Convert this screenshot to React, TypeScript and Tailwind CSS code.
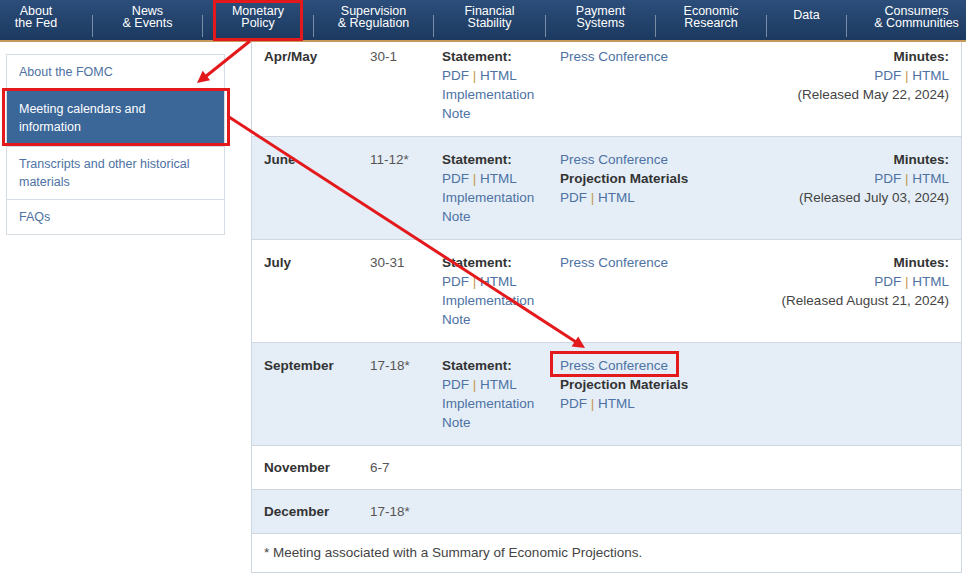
import React from "react";

const navItems = [
  { lines: ["About", "the Fed"], w: "w-[92px] pr-[20px]" },
  { lines: ["News", "& Events"], w: "w-[109px]" },
  { lines: ["Monetary", "Policy"], w: "w-[110px]" },
  { lines: ["Supervision", "& Regulation"], w: "w-[119px]" },
  { lines: ["Financial", "Stability"], w: "w-[111px]" },
  { lines: ["Payment", "Systems"], w: "w-[109px]" },
  { lines: ["Economic", "Research"], w: "w-[110px]" },
  { lines: ["Data"], w: "w-[79px]" },
  { lines: ["Consumers", "& Communities"], w: "flex-1 pl-[20px]" },
];

const sideItems = [
  { label: "About the FOMC", active: false },
  { label: "Meeting calendars and information", active: true },
  { label: "Transcripts and other historical materials", active: false },
  { label: "FAQs", active: false },
];

function PdfHtml() {
  return (
    <div>
      <span className="text-[#4d72a3]">PDF</span>
      <span className="text-[#c39a4f]"> | </span>
      <span className="text-[#4d72a3]">HTML</span>
    </div>
  );
}

function Statement() {
  return (
    <>
      <div className="font-bold text-[#333]">Statement:</div>
      <PdfHtml />
      <div className="text-[#4d72a3]">Implementation Note</div>
    </>
  );
}

function Press({ projection }: { projection?: boolean }) {
  return (
    <>
      <div className="text-[#4d72a3]">Press Conference</div>
      {projection && (
        <>
          <div className="font-bold text-[#333]">Projection Materials</div>
          <PdfHtml />
        </>
      )}
    </>
  );
}

function Minutes({ released }: { released: string }) {
  return (
    <div className="text-right">
      <div className="font-bold text-[#333]">Minutes:</div>
      <PdfHtml />
      <div className="text-[#444]">(Released {released})</div>
    </div>
  );
}

interface Meeting {
  month: string;
  dates: string;
  projection?: boolean;
  released?: string;
  full: boolean;
}

const meetings: Meeting[] = [
  { month: "Apr/May", dates: "30-1", released: "May 22, 2024", full: true },
  { month: "June", dates: "11-12*", projection: true, released: "July 03, 2024", full: true },
  { month: "July", dates: "30-31", released: "August 21, 2024", full: true },
  { month: "September", dates: "17-18*", projection: true, full: true },
  { month: "November", dates: "6-7", full: false },
  { month: "December", dates: "17-18*", full: false },
];

export default function App() {
  return (
    <div
      className="relative w-[966px] h-[578px] overflow-hidden bg-white"
      style={{ fontFamily: '"Liberation Sans", Arial, sans-serif' }}
    >
      <nav className="flex h-[42px] border-b-2 border-[#c8995a] bg-linear-to-b from-[#2c4e7a] to-[#1c3a60] text-white text-[12.5px] leading-[12px]">
        {navItems.map((item, i) => (
          <React.Fragment key={i}>
            {i > 0 && <div className="w-px h-[22px] mt-[15px] bg-white/40" />}
            <div className={`${item.w} flex flex-col items-center ${item.lines.length === 1 ? "pt-[9px]" : "pt-[5px]"}`}>
              {item.lines.map((l) => (
                <span key={l} className="whitespace-nowrap">{l}</span>
              ))}
            </div>
          </React.Fragment>
        ))}
      </nav>

      <div className="flex">
        <aside className="w-[219px] ml-[6px] mt-[12px] self-start border border-[#d5dce4] text-[12.5px] leading-[18px]">
          {sideItems.map((s, i) => (
            <div
              key={s.label}
              className={`pl-[12px] pr-[30px] ${i < sideItems.length - 1 ? "border-b border-[#d5dce4]" : ""} ${
                s.active ? "bg-[#3a6698] text-white py-[10px]" : "text-[#4d72a3] py-[8px]"
              }`}
            >
              {s.label}
            </div>
          ))}
        </aside>

        <section className="flex-1 ml-[26px] mr-[4px] border-x border-[#cfd8e1] text-[13.5px] leading-[19px]">
          {meetings.map((m, i) => (
            <div
              key={m.month}
              className={`flex border-b border-[#cfd8e1] pl-[12px] pr-[12px] ${
                i % 2 === 1 ? "bg-[#e5eef7]" : "bg-white"
              } ${i === 0 ? "pt-[5px] pb-[13px]" : m.full ? "py-[13px]" : "py-[12px]"}`}
            >
              <div className="w-[106px] font-bold text-[#333]">{m.month}</div>
              <div className="w-[72px] text-[#555]">{m.dates}</div>
              {m.full && (
                <>
                  <div className="w-[118px] pr-[12px]">
                    <Statement />
                  </div>
                  <div className="flex-1">
                    <Press projection={m.projection} />
                  </div>
                  {m.released && <Minutes released={m.released} />}
                </>
              )}
            </div>
          ))}
          <div className="pl-[12px] pt-[9px] pb-[10px] border-b border-[#cfd8e1] text-[#444]">
            * Meeting associated with a Summary of Economic Projections.
          </div>
        </section>
      </div>

      <svg className="absolute inset-0 w-full h-full pointer-events-none" viewBox="0 0 966 578">
        <g fill="none" stroke="#e3191c" strokeWidth="3">
          <rect x="214.5" y="1.5" width="87" height="38" />
          <rect x="3.5" y="89.5" width="225" height="55" />
          <rect x="551.5" y="352.5" width="126" height="23" />
          <line x1="250" y1="41" x2="205" y2="77" />
          <line x1="229" y1="117" x2="576" y2="342" />
        </g>
        <g fill="#e3191c">
          <polygon points="197,83 210.1,80.2 202.7,70.8" />
          <polygon points="585,348 571.6,346.5 578.2,336.5" />
        </g>
      </svg>
    </div>
  );
}
